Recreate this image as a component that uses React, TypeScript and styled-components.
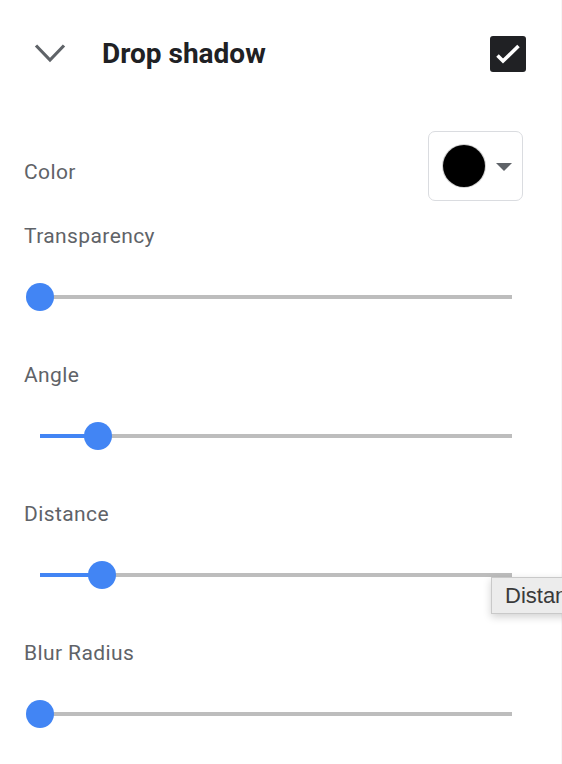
import React from "react";
import styled, { createGlobalStyle } from "styled-components";

const Global = createGlobalStyle`
  html, body {
    margin: 0;
    padding: 0;
    width: 562px;
    height: 764px;
    overflow: hidden;
    background: #f6f6f6;
  }
  body {
    font-family: Roboto, "Noto Sans", Arial, sans-serif;
  }
`;

const Panel = styled.div`
  width: 561px;
  height: 764px;
  background: #ffffff;
  display: flex;
  flex-direction: column;
`;

const Header = styled.div`
  height: 108px;
  display: flex;
  align-items: center;
  padding: 0 35px 0 34px;
  box-sizing: border-box;
`;

const Chevron = styled.svg`
  width: 34px;
  height: 24px;
  flex: none;
`;

const Title = styled.div`
  flex: 1;
  margin-left: 34px;
  font-size: 28px;
  line-height: 32px;
  font-weight: 700;
  color: #202124;
`;

const CheckBox = styled.div`
  width: 36px;
  height: 36px;
  border-radius: 3px;
  background: #202124;
  display: flex;
  align-items: center;
  justify-content: center;
`;

const ColorRow = styled.div`
  margin-top: 23px;
  height: 70px;
  display: flex;
  align-items: flex-start;
  justify-content: space-between;
  padding: 0 38px 0 24px;
`;

const Label = styled.div<{ $top?: number }>`
  font-size: 21px;
  line-height: 24px;
  letter-spacing: 0.4px;
  color: #5f6368;
  padding-top: ${(p) => p.$top ?? 0}px;
`;

const SwatchButton = styled.div`
  width: 95px;
  height: 70px;
  box-sizing: border-box;
  border: 1px solid #dadce0;
  border-radius: 7px;
  display: flex;
  align-items: center;
  padding-left: 14px;
  gap: 11px;
`;

const Swatch = styled.div<{ $color: string }>`
  width: 42px;
  height: 42px;
  border-radius: 50%;
  background: ${(p) => p.$color};
  box-shadow: 0 0 0 1px #d0d0d0;
`;

const Caret = styled.div`
  width: 0;
  height: 0;
  border-left: 8px solid transparent;
  border-right: 8px solid transparent;
  border-top: 8px solid #5f6368;
  margin-top: 1px;
`;

const Sections = styled.div`
  margin-top: 23px;
  display: flex;
  flex-direction: column;
  gap: 52px;
  padding-left: 24px;
`;

const Section = styled.div`
  display: flex;
  flex-direction: column;
  gap: 35px;
`;

const SliderBox = styled.div`
  position: relative;
  margin-left: 2px;
  width: 500px;
  height: 28px;
  padding: 0 14px;
  box-sizing: border-box;
  display: flex;
  align-items: center;
`;

const Track = styled.div`
  position: relative;
  width: 100%;
  height: 4px;
  background: #bdbdbd;
`;

const Fill = styled.div`
  position: absolute;
  left: 0;
  top: 0;
  bottom: 0;
  background: #4285f4;
`;

const Thumb = styled.div`
  position: absolute;
  top: 50%;
  width: 28px;
  height: 28px;
  margin-left: -14px;
  margin-top: -14px;
  border-radius: 50%;
  background: #4285f4;
`;

const Tooltip = styled.div`
  position: absolute;
  left: 465px;
  top: 16px;
  height: 37px;
  box-sizing: border-box;
  padding: 0 14px 0 13px;
  display: flex;
  align-items: center;
  background: #ececec;
  border: 1px solid #c9c9c9;
  box-shadow: 0 3px 8px rgba(0, 0, 0, 0.18);
  font-family: "Liberation Sans", Arial, sans-serif;
  font-size: 22px;
  color: #3a3a3a;
  white-space: nowrap;
  z-index: 2;
`;

type SliderProps = { value: number; tooltip?: string };

const Slider = ({ value, tooltip }: SliderProps) => (
  <SliderBox>
    <Track>
      <Fill style={{ width: `${value}%` }} />
      <Thumb style={{ left: `${value}%` }} />
    </Track>
    {tooltip && <Tooltip>{tooltip}</Tooltip>}
  </SliderBox>
);

const sliders = [
  { label: "Transparency", value: 0 },
  { label: "Angle", value: 12.3 },
  { label: "Distance", value: 13.1, tooltip: "Distance" },
  { label: "Blur Radius", value: 0 },
];

export default function App() {
  return (
    <>
      <Global />
      <Panel>
        <Header>
          <Chevron viewBox="0 0 34 24">
            <polyline
              points="2,3.5 16,18 30,3.5"
              fill="none"
              stroke="#5f6368"
              strokeWidth="3.2"
              strokeLinejoin="miter"
            />
          </Chevron>
          <Title>Drop shadow</Title>
          <CheckBox>
            <svg width="36" height="36" viewBox="0 0 36 36">
              <polyline
                points="7.5,19.5 13,25 28.5,10"
                fill="none"
                stroke="#ffffff"
                strokeWidth="3.6"
              />
            </svg>
          </CheckBox>
        </Header>
        <ColorRow>
          <Label $top={29}>Color</Label>
          <SwatchButton>
            <Swatch $color="#000000" />
            <Caret />
          </SwatchButton>
        </ColorRow>
        <Sections>
          {sliders.map((s) => (
            <Section key={s.label}>
              <Label>{s.label}</Label>
              <Slider value={s.value} tooltip={s.tooltip} />
            </Section>
          ))}
        </Sections>
      </Panel>
    </>
  );
}
